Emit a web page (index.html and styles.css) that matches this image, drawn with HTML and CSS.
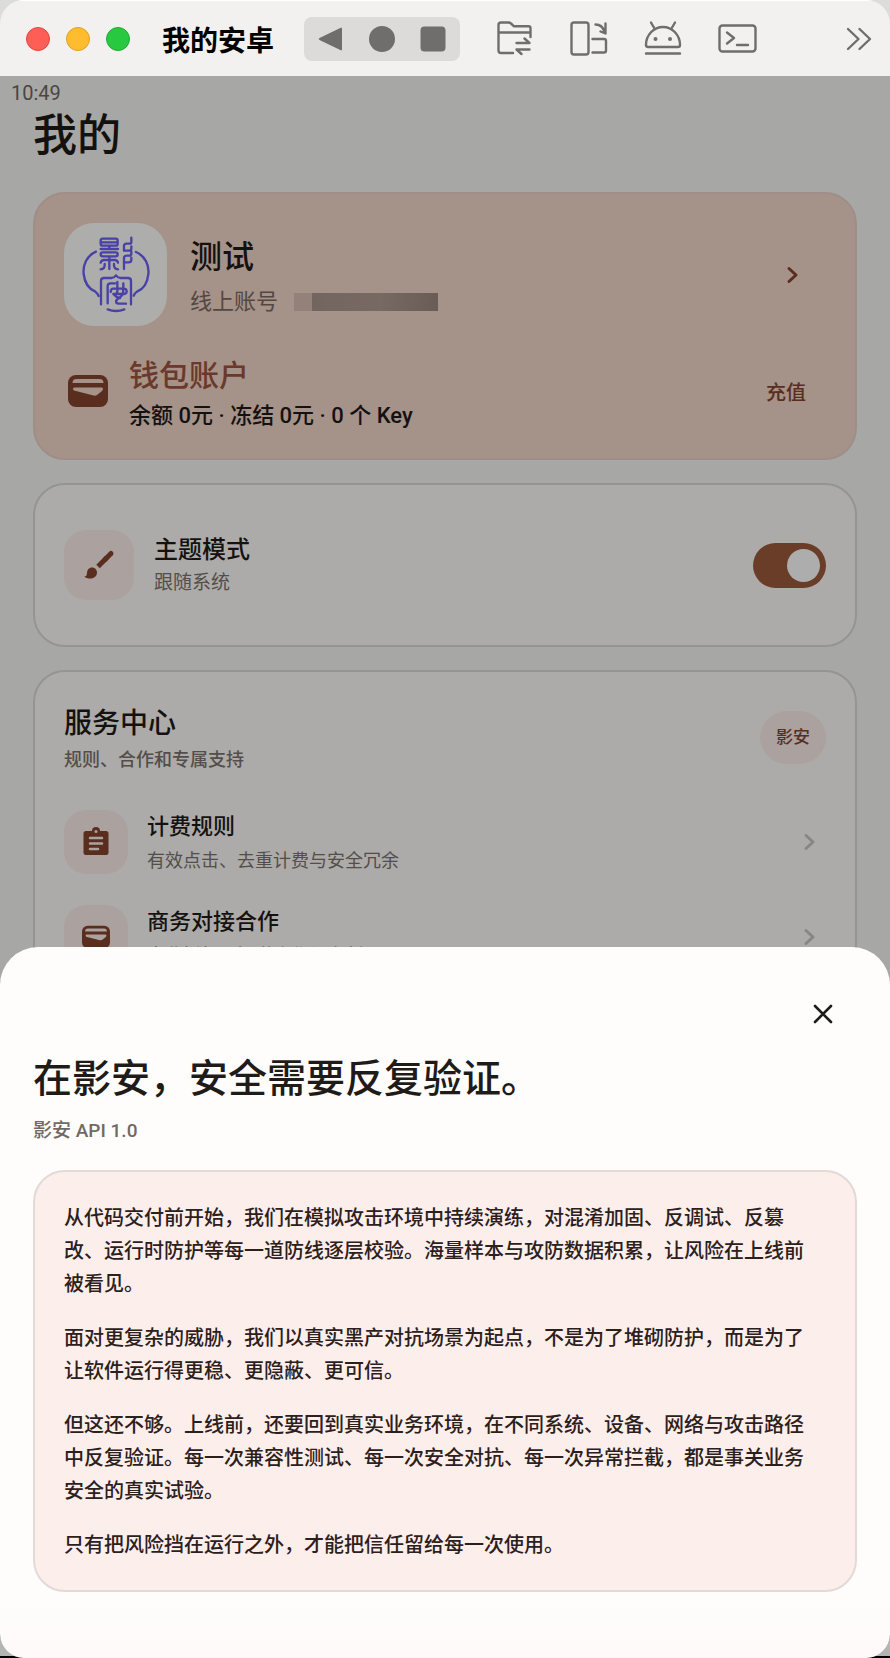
FILE: index.html
```
<!DOCTYPE html>
<html lang="zh-CN">
<head>
    <meta charset="UTF-8">
    <meta name="viewport" content="width=device-width, initial-scale=1.0">
    <title>我的安卓</title>
    <link rel="stylesheet" href="styles.css">
</head>
<body>
    <div class="window">
        <header class="toolbar">
            <div class="lights">
                <button class="light light-close" aria-label="关闭"></button>
                <button class="light light-min" aria-label="最小化"></button>
                <button class="light light-max" aria-label="最大化"></button>
            </div>
            <div class="window-title">我的安卓</div>
            <div class="nav-keys">
                <button class="key-btn" aria-label="返回">
                    <svg width="28" height="28" viewBox="0 0 28 28"><path d="M25 3.500v21q0 1.200-1.200.7L2.500 15q-1.600-1 0-2L23.800 2.800q1.200-.5 1.200.7z" fill="#6f6e6c"/></svg>
                </button>
                <button class="key-btn" aria-label="主屏幕">
                    <svg width="28" height="28" viewBox="0 0 28 28"><circle cx="14" cy="14" r="13" fill="#6f6e6c"/></svg>
                </button>
                <button class="key-btn" aria-label="最近任务">
                    <svg width="28" height="28" viewBox="0 0 28 28"><rect x="1.500" y="1.500" width="25" height="25" rx="4" fill="#6f6e6c"/></svg>
                </button>
            </div>
            <div class="tools">
                <button class="tool-btn" aria-label="文件传输">
                    <svg class="line-icon" width="40" height="40" viewBox="0 0 40 40">
                        <path d="M18 34H6q-2.500 0-2.500-2.500V6q0-2.500 2.500-2.500h7.500q1.500 0 2.500 1l3 2.800h14.500q2 0 2 2V18M3.500 13.500h32M21.500 24h13l-5-4.500M34.500 30.500h-13l5 4.500"/>
                    </svg>
                </button>
                <button class="tool-btn" aria-label="旋转屏幕">
                    <svg class="line-icon" width="40" height="40" viewBox="0 0 40 40">
                        <rect x="2.500" y="3.500" width="17" height="32" rx="2.500"/>
                        <path d="M23.500 20H35q2 0 2 2v9.500q0 2-2 2H23.500M26.500 5.500q7 0 9 7.500M36.500 4.500v10l-5-2"/>
                    </svg>
                </button>
                <button class="tool-btn" aria-label="安卓">
                    <svg class="line-icon" width="40" height="40" viewBox="0 0 40 40">
                        <path d="M3 26a17 18 0 0 1 34 0q0 2-2 2H5q-2 0-2-2zM11.500 9.500L8 3.500M28.500 9.500l3.500-6M3 34.500h34"/>
                        <circle class="dot" cx="12.500" cy="20" r="2"/>
                        <circle class="dot" cx="27" cy="20" r="2"/>
                    </svg>
                </button>
                <button class="tool-btn" aria-label="终端">
                    <svg class="line-icon" width="40" height="40" viewBox="0 0 40 40">
                        <rect x="2.500" y="6.500" width="36" height="26" rx="3"/>
                        <path d="M10 13.500l7 5.500-7 5.500M20 26h11"/>
                    </svg>
                </button>
            </div>
            <button class="tool-btn more-btn" aria-label="更多">
                <svg class="line-icon" width="28" height="28" viewBox="0 0 28 28"><path d="M4 4l10.500 10L4 24M15.500 4L26 14 15.500 24"/></svg>
            </button>
        </header>

        <main class="screen">
            <div class="status-bar">10:49</div>
            <div class="page">
                <h1 class="page-title">我的</h1>

                <section class="card account-card">
                    <div class="row profile-row">
                        <svg class="avatar" viewBox="12 9 309 309">
                            <rect x="12" y="9" width="309" height="309" fill="#fffffc"/>
                            <g fill="none" stroke="#6c60f5" stroke-width="7" stroke-linecap="round" stroke-linejoin="round">
                                <path d="M108 95C80 107 68 135 71 162c3 27 17 45 34 52q8 6 11 14M228 96c28 12 40 40 37 67-3 27-17 45-34 52q-7 5-10 12"/>
                                <path d="M128 56h39q6 0 6 6v9q0 6-6 6h-39q-6 0-6-6v-9q0-6 6-6zM126 67h43M122 87h52M128 97h39q6 0 6 6t-6 6h-39q-6 0-6-6t6-6zM148 78v9M148 110v37M122 128q2-8 10-8h32q8 0 10 8M122 148q12-1 12-12v-4M174 148q-12-1-12-12v-4"/>
                                <path d="M214 53v12q0 6-6 6h-8q-8 0-8 7v14h14q8 0 8-7v-6M214 94v6q0 7-6 7h-8q-8 0-8 7v33M192 127h13q9 0 9-8v-6"/>
                                <path d="M123 253v-70q0-9 9-9h22q8 0 14-8 6 8 14 8h22q9 0 9 9v70M143 250v-52q0-8 8-8h14M152 216q0-10 8-10h32q8 0 8 8t-8 8h-32M172 186v28q0 8-8 8M190 190v18q0 18-10 24t-12 12q0 7 8 7h22M160 222q8 10 20 12"/>
                                <path d="M143 268q25 10 50 0"/>
                            </g>
                        </svg>
                        <div class="row-text">
                            <div class="profile-name">测试</div>
                            <div class="profile-id">线上账号 <span class="masked"></span></div>
                        </div>
                        <a class="go-link" href="#" aria-label="账号详情">
                            <svg class="chevron" width="28" height="28" viewBox="0 0 28 28"><path d="M11 7.500l7 6.500-7 6.500"/></svg>
                        </a>
                    </div>
                    <div class="row wallet-row">
                        <svg class="wallet-icon" width="40" height="34" viewBox="0 0 40 34">
                            <rect x="0" y="1" width="40" height="32" rx="8" fill="#84442f"/>
                            <path d="M4.500 9q0-4 4-4h23q4 0 4 4zM6 13.500h28q2 1 0 3.500l-5 4q-1.500 1-3.500.5L6 16.500q-2-1.500 0-3z" fill="#f4d7c9"/>
                        </svg>
                        <div class="row-text">
                            <div class="wallet-title">钱包账户</div>
                            <div class="wallet-info">余额 0元 · 冻结 0元 · 0 个 Key</div>
                        </div>
                        <button class="recharge-btn">充值</button>
                    </div>
                </section>

                <section class="card theme-card">
                    <div class="row">
                        <span class="tile tile-lg">
                            <svg width="32" height="32" viewBox="0 0 32 32">
                                <path d="M15 17.500l9-9" stroke="#84442f" stroke-width="5"/>
                                <path d="M22 10.500l6-6" stroke="#84442f" stroke-width="5" stroke-linecap="round"/>
                                <path d="M9 18.500c3 0 5 2.200 5 5 0 3.500-2.800 6-6.500 6-2.500 0-5-.5-6.200-2 2 0 2.500-1 2.700-3.500.2-3.200 2-5.500 5-5.500z" fill="#84442f"/>
                            </svg>
                        </span>
                        <label class="row-text" for="theme-switch">
                            <span class="theme-title">主题模式</span>
                            <span class="theme-desc">跟随系统</span>
                        </label>
                        <input class="switch" type="checkbox" id="theme-switch" checked>
                    </div>
                </section>

                <section class="card service-card">
                    <div class="row service-header">
                        <div class="row-text">
                            <h2 class="service-title">服务中心</h2>
                            <div class="service-desc">规则、合作和专属支持</div>
                        </div>
                        <span class="pill">影安</span>
                    </div>
                    <a class="row service-item" href="#">
                        <span class="tile">
                            <svg width="28" height="30" viewBox="0 0 28 30">
                                <path d="M4 4h6a4 4 0 0 1 8 0h6q2.500 0 2.500 2.500v19q0 2.500-2.500 2.500H4q-2.500 0-2.500-2.500v-19Q1.500 4 4 4z" fill="#84442f"/>
                                <circle cx="14" cy="4.500" r="1.500" fill="#fceeea"/>
                                <path d="M8 11h12M8 16.500h12M8 22h8" stroke="#fceeea" stroke-width="2.500" stroke-linecap="round"/>
                            </svg>
                        </span>
                        <span class="row-text">
                            <span class="item-title">计费规则</span>
                            <span class="item-desc">有效点击、去重计费与安全冗余</span>
                        </span>
                        <svg class="chevron chevron-light" width="28" height="28" viewBox="0 0 28 28"><path d="M11 7.500l7 6.500-7 6.500"/></svg>
                    </a>
                    <a class="row service-item" href="#">
                        <span class="tile">
                            <svg width="28" height="24" viewBox="0 0 40 34">
                                <rect x="0" y="1" width="40" height="32" rx="8" fill="#84442f"/>
                                <path d="M4.500 9q0-4 4-4h23q4 0 4 4zM6 13.500h28q2 1 0 3.500l-5 4q-1.500 1-3.500.5L6 16.500q-2-1.500 0-3z" fill="#fceeea"/>
                            </svg>
                        </span>
                        <span class="row-text">
                            <span class="item-title">商务对接合作</span>
                            <span class="item-desc">商业授权、渠道合作与定制</span>
                        </span>
                        <svg class="chevron chevron-light" width="28" height="28" viewBox="0 0 28 28"><path d="M11 7.500l7 6.500-7 6.500"/></svg>
                    </a>
                </section>
            </div>

            <div class="scrim"></div>

            <div class="sheet" role="dialog" aria-labelledby="sheet-title">
                <button class="close-btn" aria-label="关闭">
                    <svg width="24" height="24" viewBox="0 0 24 24"><path d="M4 4l16 16M20 4L4 20" stroke="#1e1b18" stroke-width="2.600" stroke-linecap="round"/></svg>
                </button>
                <h2 class="sheet-title" id="sheet-title">在影安，安全需要反复验证。</h2>
                <div class="sheet-version">影安 API 1.0</div>
                <div class="sheet-card">
                    <p>从代码交付前开始，我们在模拟攻击环境中持续演练，对混淆加固、反调试、反篡改、运行时防护等每一道防线逐层校验。海量样本与攻防数据积累，让风险在上线前被看见。</p>
                    <p>面对更复杂的威胁，我们以真实黑产对抗场景为起点，不是为了堆砌防护，而是为了让软件运行得更稳、更隐蔽、更可信。</p>
                    <p>但这还不够。上线前，还要回到真实业务环境，在不同系统、设备、网络与攻击路径中反复验证。每一次兼容性测试、每一次安全对抗、每一次异常拦截，都是事关业务安全的真实试验。</p>
                    <p>只有把风险挡在运行之外，才能把信任留给每一次使用。</p>
                </div>
            </div>
        </main>
    </div>
</body>
</html>
```

FILE: styles.css
```
* {
    box-sizing: border-box;
}
html {
    background: linear-gradient(to bottom, #dcdcda 0, #b4b4b2 calc(100% - 2px), #000 calc(100% - 2px));
}
body {
    margin: 0;
    font-family: Roboto, "Noto Sans CJK SC", sans-serif;
    color: #1e1b18;
}
button {
    padding: 0;
    border: none;
    background: none;
    font-family: inherit;
    cursor: pointer;
}
a {
    color: inherit;
    text-decoration: none;
}
svg {
    display: block;
}
h1, h2, p {
    margin: 0;
}
.window {
    display: flex;
    flex-direction: column;
    height: 100vh;
    overflow: hidden;
    border-radius: 24px;
}

/* 窗口工具栏 */
.toolbar {
    display: flex;
    align-items: center;
    flex-shrink: 0;
    height: 76px;
    padding: 0 18px 0 26px;
    background: #f2f1ef;
    border-top: 1px solid #fff;
}
.lights {
    display: flex;
    gap: 16px;
}
.light {
    width: 24px;
    height: 24px;
    border-radius: 50%;
}
.light-close {
    background: #fd5f57;
    border: 1px solid #e2463f;
}
.light-min {
    background: #febc2e;
    border: 1px solid #e0a023;
}
.light-max {
    background: #28c840;
    border: 1px solid #1fab31;
}
.window-title {
    margin-left: 32px;
    padding-top: 6px;
    font-size: 28px;
    font-weight: 700;
    line-height: 40px;
    color: #000;
}
.nav-keys {
    display: flex;
    align-items: center;
    gap: 23px;
    height: 44px;
    margin-left: 30px;
    padding: 0 13px;
    border-radius: 8px;
    background: #dcdbd9;
}
.tools {
    display: flex;
    gap: 34px;
    margin-left: 35px;
}
.more-btn {
    margin-left: auto;
}
.line-icon {
    fill: none;
    stroke: #6f6e6c;
    stroke-width: 2.4;
    stroke-linecap: round;
    stroke-linejoin: round;
}
.line-icon .dot {
    fill: #6f6e6c;
    stroke: none;
}

/* 手机画面 */
.screen {
    position: relative;
    flex: 1;
    overflow: hidden;
    background: #f7f7f3;
}
.status-bar {
    padding: 2px 11px 0;
    font-size: 20px;
    line-height: 30px;
    color: #6c6966;
}
.page {
    padding: 0 33px;
}
.page-title {
    margin-bottom: 28px;
    font-size: 44px;
    font-weight: 500;
    line-height: 56px;
}
.card {
    margin-bottom: 23px;
    padding: 29px;
    border: 2px solid #dcdad6;
    border-radius: 32px;
    background: #fefdf9;
}
.row {
    display: flex;
    align-items: center;
}
.row-text {
    display: flex;
    flex-direction: column;
    flex: 1;
}
.account-card {
    padding-bottom: 26px;
    background: #f4d7c9;
    border-color: #ead2c7;
}
.avatar {
    width: 103px;
    height: 103px;
    margin-right: 23px;
    border-radius: 30px;
}
.profile-row .row-text {
    padding-top: 4px;
}
.profile-name {
    font-size: 32px;
    font-weight: 500;
    line-height: 50px;
}
.profile-id {
    display: flex;
    align-items: center;
    font-size: 22px;
    line-height: 40px;
    color: #7a6a62;
}
.masked {
    width: 144px;
    height: 18px;
    margin-left: 16px;
    background: linear-gradient(to right, #d9bfb4 18px, #a9968d 18px, #b09c92 60%, #9a897f);
}
.go-link {
    padding: 0 20px;
}
.chevron {
    fill: none;
    stroke: #84442f;
    stroke-width: 3;
    stroke-linecap: round;
    stroke-linejoin: round;
}
.chevron-light {
    margin-right: 3px;
    stroke: #cbc5c0;
}
.wallet-row {
    padding: 24px 20px 0 4px;
}
.wallet-icon {
    margin-right: 21px;
}
.wallet-title {
    padding-top: 2px;
    font-size: 30px;
    font-weight: 500;
    line-height: 48px;
    color: #9d5540;
}
.wallet-info {
    font-size: 22px;
    font-weight: 500;
    line-height: 32px;
}
.recharge-btn {
    font-size: 20px;
    font-weight: 500;
    color: #84442f;
}
.theme-card {
    padding: 45px 29px;
}
.tile {
    display: flex;
    align-items: center;
    justify-content: center;
    width: 64px;
    height: 64px;
    margin-right: 19px;
    border-radius: 22px;
    background: #fceeea;
}
.tile-lg {
    width: 70px;
    height: 70px;
    margin-right: 20px;
}
.theme-title {
    font-size: 24px;
    font-weight: 500;
    line-height: 36px;
}
.theme-desc {
    font-size: 19px;
    line-height: 30px;
    color: #7b736e;
}
.switch {
    display: flex;
    align-items: center;
    justify-content: flex-end;
    appearance: none;
    width: 73px;
    height: 45px;
    margin: 0;
    padding: 0 6px;
    border-radius: 23px;
    background: #9d5a3c;
    cursor: pointer;
}
.switch::before {
    content: '';
    width: 33px;
    height: 33px;
    border-radius: 50%;
    background: #fff;
}
.switch:not(:checked) {
    justify-content: flex-start;
    background: #cbc5c0;
}
.service-header {
    margin-bottom: 33px;
}
.service-title {
    font-size: 28px;
    font-weight: 500;
    line-height: 46px;
}
.service-desc {
    font-size: 18px;
    font-weight: 500;
    line-height: 26px;
    color: #7b736e;
}
.pill {
    padding: 0 16px;
    border-radius: 27px;
    font-size: 17px;
    font-weight: 500;
    line-height: 53px;
    color: #84442f;
    background: #fceeea;
}
.service-item {
    margin-bottom: 23px;
}
.service-item .row-text {
    padding-top: 4px;
}
.item-title {
    font-size: 22px;
    font-weight: 500;
    line-height: 34px;
}
.item-desc {
    font-size: 18px;
    line-height: 34px;
    color: #7b736e;
}

/* 遮罩和底部弹层 */
.scrim {
    position: absolute;
    inset: 0;
    background: rgba(0,0,0,0.32);
}
.sheet {
    position: absolute;
    left: 0;
    right: 0;
    bottom: 0;
    display: flex;
    flex-direction: column;
    padding: 43px 33px 66px;
    border-radius: 38px 38px 24px 24px;
    background: linear-gradient(to bottom, #fefdfb 92%, #fef9f8);
}
.close-btn {
    display: flex;
    align-items: center;
    justify-content: center;
    align-self: flex-end;
    width: 48px;
    height: 48px;
    margin-right: 10px;
}
.sheet-title {
    margin-top: 15px;
    font-size: 39px;
    font-weight: 500;
    line-height: 52px;
}
.sheet-version {
    margin: 12px 0 25px;
    font-size: 19px;
    font-weight: 500;
    line-height: 28px;
    color: #736963;
}
.sheet-card {
    display: flex;
    flex-direction: column;
    gap: 21px;
    padding: 30px 32px 28px 29px;
    border: 2px solid #e3d9d6;
    border-radius: 32px;
    background: #fceeea;
    font-size: 20px;
    font-weight: 500;
    line-height: 33px;
    color: #2b201c;
}
```
